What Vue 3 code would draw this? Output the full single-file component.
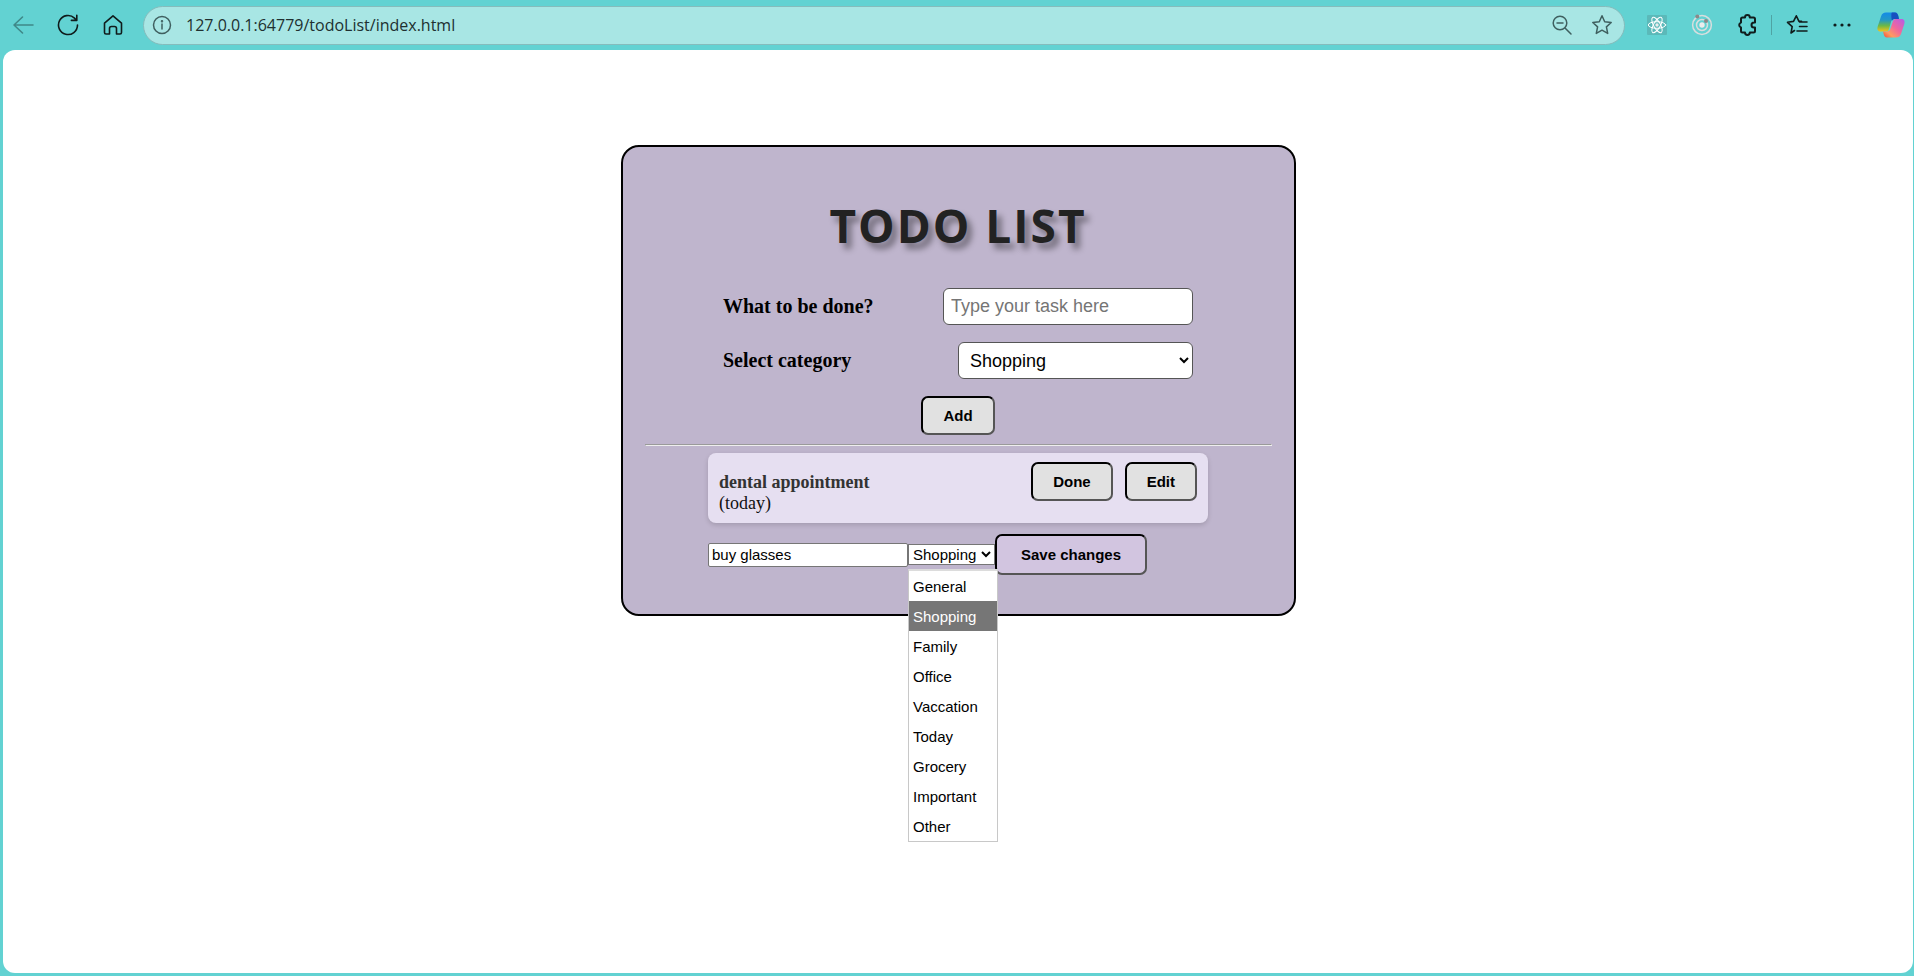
<script setup>
import { ref } from 'vue'

const url = ref('127.0.0.1:64779/todoList/index.html')
const categories = ['General', 'Shopping', 'Family', 'Office', 'Vaccation', 'Today', 'Grocery', 'Important', 'Other']
const newTask = ref('')
const newCategory = ref('Shopping')
const editText = ref('buy glasses')
const editCategory = ref('Shopping')
</script>

<template>
  <div class="browser">
    <header class="toolbar">
      <button class="tool" aria-label="Back">
        <svg width="22" height="22" viewBox="0 0 22 22" class="faded"><path d="M10.5 3 2 11l8.500 8M2 11h19" /></svg>
      </button>
      <button class="tool" aria-label="Refresh">
        <svg width="22" height="22" viewBox="0 0 22 22"><path d="M20.500 11a9.500 9.500 0 1 1-3-6.900l2 2.100M19.800 1.200v5.200h-5.400" /></svg>
      </button>
      <button class="tool" aria-label="Home">
        <svg width="22" height="22" viewBox="0 0 22 22"><path d="M2.500 9.200 11 1.800l8.500 7.400v9.300a1.500 1.500 0 0 1-1.500 1.500h-3.500v-5.500a2 2 0 0 0-2-2h-3a2 2 0 0 0-2 2V20H4a1.500 1.500 0 0 1-1.500-1.500z" /></svg>
      </button>
      <div class="address">
        <svg width="20" height="20" viewBox="0 0 20 20" class="muted"><circle cx="10" cy="10" r="8.500" /><path d="M10 9v5" /><circle cx="10" cy="6.300" r=".5" /></svg>
        <input v-model="url" class="url" type="text" aria-label="Address" spellcheck="false" />
        <button class="plain" aria-label="Zoom out">
          <svg width="22" height="22" viewBox="0 0 22 22" class="muted"><circle cx="9" cy="9" r="6.800" /><path d="M6 9h6M14 14l6 6" /></svg>
        </button>
        <button class="plain" aria-label="Add to favorites">
          <svg width="22" height="22" viewBox="0 0 22 22" class="muted"><path d="m11 1.800 2.700 5.900 6.500.8-4.800 4.400 1.300 6.500-5.700-3.200-5.700 3.200 1.300-6.500-4.800-4.400 6.500-.8z" /></svg>
        </button>
      </div>
      <div class="extras">
        <button class="tool" aria-label="React developer tools">
          <svg width="20" height="20" viewBox="0 0 20 20">
            <rect class="tile" width="20" height="20" rx="1" />
            <g class="atom"><ellipse cx="10" cy="10" rx="8.700" ry="3.300" /><ellipse cx="10" cy="10" rx="8.700" ry="3.300" transform="rotate(60 10 10)" /><ellipse cx="10" cy="10" rx="8.700" ry="3.300" transform="rotate(120 10 10)" /></g>
            <circle class="light" cx="10" cy="10" r="1.700" />
          </svg>
        </button>
        <button class="tool" aria-label="Orbit extension">
          <svg width="22" height="22" viewBox="0 0 22 22">
            <g class="orbit"><circle cx="11" cy="11" r="9.400" /><circle cx="11" cy="11" r="5.500" /></g>
            <circle class="light" cx="11" cy="11" r="2.700" /><circle class="moon" cx="6.300" cy="2.600" r="2" /><circle class="moon" cx="15" cy="7" r="2" />
          </svg>
        </button>
        <button class="tool" aria-label="Extensions">
          <svg width="22" height="22" viewBox="0 0 22 22" class="puzzle"><path d="M5 5a1.500 1.500 0 0 1 1.500-1.500H9a2.400 2.400 0 0 1 4.800 0h3.700a1.500 1.500 0 0 1 1.500 1.500v3.500h-1a2.500 2.500 0 0 0 0 5h1V17a1.500 1.500 0 0 1-1.500 1.500h-3.700a2.400 2.400 0 0 1-4.800 0H6.500A1.500 1.500 0 0 1 5 17v-3.600a2.500 2.500 0 0 1 0-4.800z" /></svg>
        </button>
        <span class="divider"></span>
        <button class="tool" aria-label="Favorites">
          <svg width="22" height="22" viewBox="0 0 22 22"><path d="M8.500 16.500 5 19l1.200-6.400L1.500 8.300l6-.9 2.800-5.600 2.700 5.600h2.500M13.500 8H21M13.500 12.500H21M11 17h10" /></svg>
        </button>
        <button class="tool" aria-label="Settings and more">
          <svg width="22" height="22" viewBox="0 0 22 22" class="dots"><circle cx="4" cy="11" r="1.600" /><circle cx="11" cy="11" r="1.600" /><circle cx="18" cy="11" r="1.600" /></svg>
        </button>
        <button class="tool copilot" aria-label="Copilot">
          <svg width="28" height="26" viewBox="0 0 28 26">
            <defs>
              <linearGradient id="cool" x1="0" y1="0" x2="0" y2="1"><stop offset="0" stop-color="#138be8" /><stop offset=".4" stop-color="#2399c4" /><stop offset=".7" stop-color="#6db944" /><stop offset="1" stop-color="#f4c21b" /></linearGradient>
              <linearGradient id="warm" x1="1" y1="0" x2="0" y2="1"><stop offset="0" stop-color="#b45bea" /><stop offset=".45" stop-color="#f0679c" /><stop offset=".75" stop-color="#ff9b61" /><stop offset="1" stop-color="#f04a35" /></linearGradient>
            </defs>
            <path fill="url(#cool)" d="M9 .5h9c2 0 2.700 1.500 3.200 3L22 7h-4.500c-2 0-3 1.200-3.500 3l-2 7c-.5 1.500-1.200 2.500-3 2.500H3.500C.5 19.500 0 17 .7 14.500L4 4.500C5 1.500 6.500.5 9 .5z" />
            <path fill="#1750bf" d="M15 .5h3c2 0 2.700 1.500 3.200 3L22 7h-4c-1.500 0-2.500.6-3 2-.7-3-1-8.500 0-8.500z" />
            <path fill="url(#warm)" d="M19 7h5.500c3 0 3.500 2.500 2.800 5L24 22c-.8 2.500-2.500 3.500-5 3.500h-9c-2 0-2.800-1.500-3.200-3L6 19.500h4c2 0 3-1 3.500-3l2.300-7C16.300 8 17 7 19 7z" />
          </svg>
        </button>
      </div>
    </header>

    <main class="page">
      <section class="card">
        <h1>TODO LIST</h1>
        <form class="task-form" @submit.prevent>
          <div class="field">
            <label for="task">What to be done?</label>
            <input id="task" v-model="newTask" class="task-input" type="text" placeholder="Type your task here" />
          </div>
          <div class="field">
            <label for="category">Select category</label>
            <select id="category" v-model="newCategory" class="category-select">
              <option v-for="c in categories" :key="c">{{ c }}</option>
            </select>
          </div>
          <button class="btn add" type="submit">Add</button>
        </form>
        <hr />
        <ul class="tasks">
          <li class="task">
            <div class="task-text"><strong>dental appointment</strong><span>(today)</span></div>
            <div class="actions">
              <button class="btn" type="button">Done</button>
              <button class="btn" type="button">Edit</button>
            </div>
          </li>
          <li class="edit-row">
            <input v-model="editText" class="edit-input" type="text" aria-label="Task text" />
            <div class="picker">
              <select v-model="editCategory" class="edit-select" aria-label="Task category">
                <option v-for="c in categories" :key="c">{{ c }}</option>
              </select>
              <div class="menu" role="listbox" aria-label="Categories">
                <div
                  v-for="c in categories"
                  :key="c"
                  class="option"
                  :class="{ selected: c === editCategory }"
                  role="option"
                  :aria-selected="c === editCategory"
                  @click="editCategory = c"
                >{{ c }}</div>
              </div>
            </div>
            <button class="btn save" type="button">Save changes</button>
          </li>
        </ul>
      </section>
    </main>
  </div>
</template>

<style>
body {
  margin: 0;
  background: #62d2d2;
}
</style>

<style scoped>
* {
  box-sizing: border-box;
}
.browser {
  display: flex;
  flex-direction: column;
  min-height: 100vh;
  padding: 0 1px 3px 3px;
  background: #62d2d2;
}
.toolbar {
  display: flex;
  align-items: center;
  height: 50px;
  padding-left: 3px;
}
.tool,
.plain {
  display: flex;
  align-items: center;
  justify-content: center;
  padding: 0;
  border: 0;
  background: none;
}
.tool {
  flex: none;
  width: 45px;
  height: 40px;
}
.toolbar > .tool:first-child {
  width: 34px;
  margin-right: 5px;
}
svg {
  display: block;
  fill: none;
  stroke: #101c1c;
  stroke-width: 1.6;
  stroke-linecap: round;
  stroke-linejoin: round;
}
svg.faded {
  stroke: #3f8888;
}
svg.muted {
  stroke: #3f5f5f;
  stroke-width: 1.5;
}
svg.puzzle {
  stroke-width: 2;
}
.tile {
  fill: #5bb9b9;
  stroke: none;
}
.atom {
  stroke: #ffffff;
  stroke-width: 1;
}
.light {
  fill: #ececec;
  stroke: none;
}
.orbit {
  stroke: #d8dede;
  stroke-width: 1.5;
}
.moon {
  fill: #8a8a8a;
  stroke: none;
}
.dots {
  fill: #101c1c;
  stroke: none;
}
.copilot {
  margin-left: 4px;
}
.copilot svg {
  stroke: none;
}
.address {
  display: flex;
  flex: 1;
  align-items: center;
  gap: 18px;
  height: 39px;
  margin-left: 8px;
  padding: 0 11px 0 8px;
  border: 1px solid #85bcbc;
  border-radius: 20px;
  background: #a8e6e4;
}
.url {
  flex: 1;
  min-width: 0;
  margin-left: -4px;
  padding: 0;
  border: 0;
  outline: 0;
  background: none;
  color: #203030;
  font: 16px "Open Sans", "Noto Sans", sans-serif;
}
.extras {
  display: flex;
  align-items: center;
  margin-left: 9px;
}
.divider {
  width: 1px;
  height: 20px;
  margin: 0 2px;
  background: #4fa3a3;
}
.page {
  flex: 1;
  padding: 95px 16px 40px;
  border-radius: 12px;
  background: #ffffff;
}
.card {
  width: 100%;
  max-width: 675px;
  margin: 0 auto;
  padding: 47px 22px 39px;
  border: 2px solid #000000;
  border-radius: 18px;
  background: #bfb5cd;
  font-family: "Liberation Serif", serif;
}
h1 {
  margin: 0 0 31px;
  color: #222222;
  font: bold 46px/63px "Open Sans", "Noto Sans", sans-serif;
  letter-spacing: 2px;
  text-align: center;
  text-shadow: 5px 6px 6px rgba(0, 0, 0, 0.4);
}
.task-form {
  display: flex;
  flex-direction: column;
  gap: 17px;
  max-width: 500px;
  margin: 0 auto;
  padding: 0 15px;
}
.field {
  display: flex;
  align-items: center;
  justify-content: space-between;
}
.field label {
  color: #000000;
  font-size: 20px;
  font-weight: bold;
}
.task-input,
.category-select {
  height: 37px;
  border: 1px solid #555555;
  border-radius: 6px;
  background-color: #ffffff;
  color: #000000;
  font: 18px "Liberation Sans", sans-serif;
}
.task-input {
  width: 250px;
  padding: 0 7px;
}
.task-input::placeholder {
  color: #757575;
}
.category-select {
  width: 235px;
  padding: 0 0 0 7px;
}
.btn {
  height: 39px;
  padding: 0 20px;
  border: 2px solid;
  border-color: #000000 #555555 #555555 #000000;
  border-radius: 7px;
  background: #e1e1e1;
  color: #000000;
  font: bold 15px "Liberation Sans", sans-serif;
}
.add {
  align-self: center;
}
hr {
  margin: 9px 0 7px;
  border: 1px solid;
  border-color: #9a9a9a #eeeeee #eeeeee #9a9a9a;
}
.tasks {
  max-width: 500px;
  margin: 0 auto;
  padding: 0;
  list-style: none;
}
.task {
  display: flex;
  justify-content: space-between;
  height: 70px;
  padding: 9px 11px;
  border-radius: 8px;
  background: #e6dff1;
  box-shadow: 0 2px 5px rgba(0, 0, 0, 0.15);
}
.task-text {
  display: flex;
  flex-direction: column;
  padding-top: 10px;
  color: #111111;
  font-size: 18px;
  line-height: 21px;
}
.task-text strong {
  color: #333333;
}
.actions {
  display: flex;
  gap: 12px;
}
.edit-row {
  display: flex;
  align-items: center;
  margin-top: 11px;
}
.edit-input,
.edit-select {
  border: 1px solid #767676;
  background-color: #ffffff;
  color: #000000;
  font: 15px "Liberation Sans", sans-serif;
}
.edit-input {
  width: 200px;
  height: 24px;
  padding: 1px 3px;
  border-radius: 2px;
}
.picker {
  position: relative;
}
.edit-select {
  display: block;
  width: 87px;
  height: 21px;
  padding: 0;
  border-radius: 0;
}
.menu {
  position: absolute;
  z-index: 1;
  top: 25px;
  left: 0;
  width: 90px;
  border: 1px solid #c8c8c8;
  border-top: 2px solid #dcdcdc;
  background: #ffffff;
}
.option {
  padding: 1px 0 0 4px;
  color: #000000;
  font: 15px/29px "Liberation Sans", sans-serif;
}
.option.selected {
  background: #767676;
  color: #ffffff;
}
.save {
  height: 41px;
  padding: 0 24px;
  background: #d2c5e0;
}
</style>
